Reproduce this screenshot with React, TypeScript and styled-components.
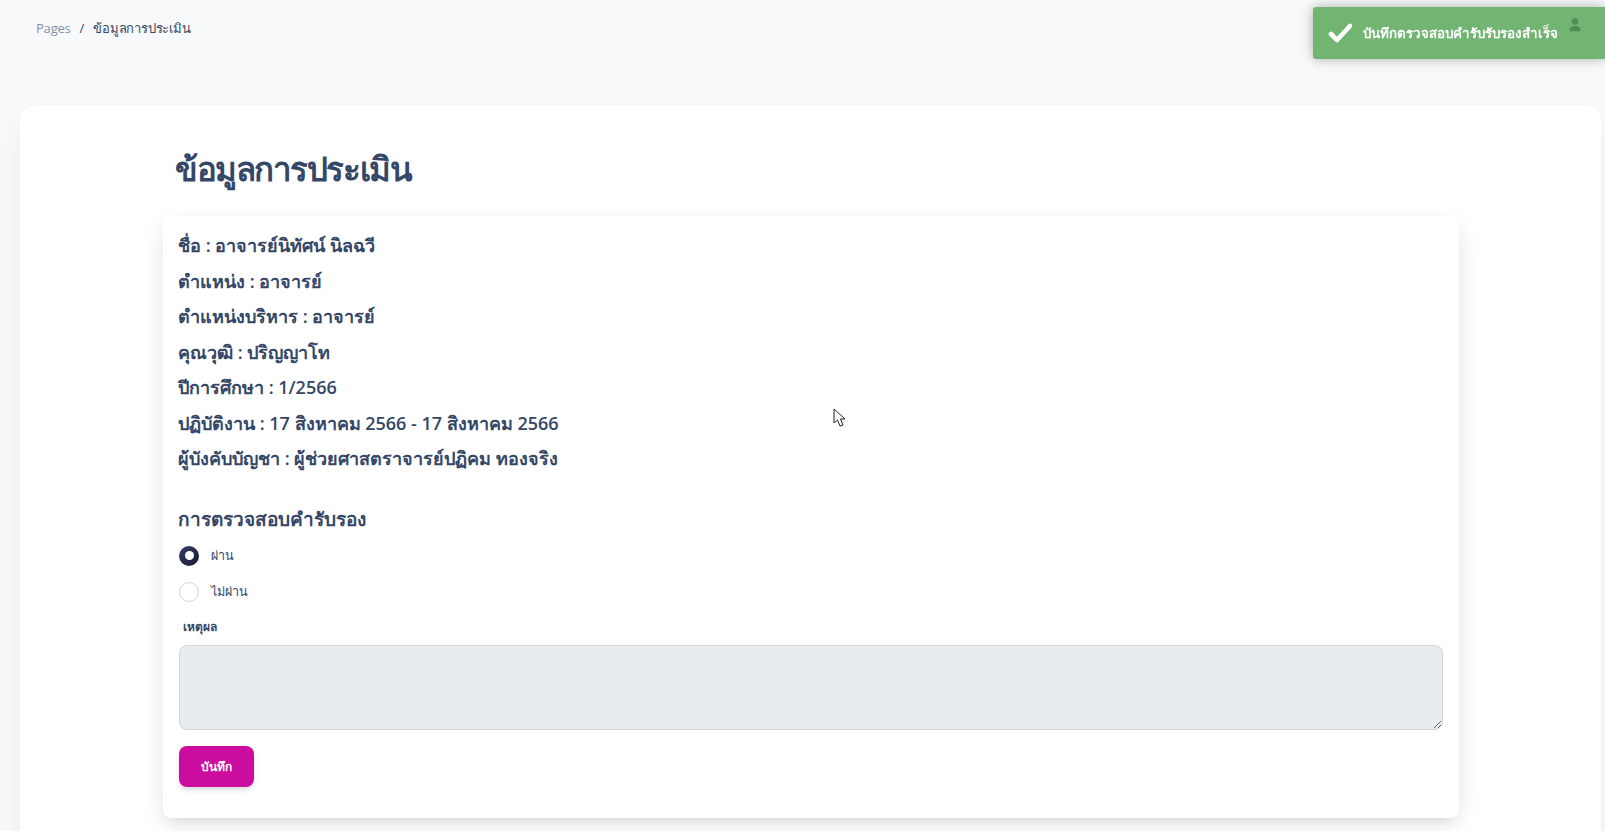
import styled, { createGlobalStyle } from 'styled-components'

const GlobalStyle = createGlobalStyle`
  html, body {
    margin: 0;
    height: 831px;
    overflow: hidden;
    background: #f8f9fa;
    font-family: "Open Sans", "Noto Sans", sans-serif;
    color: #344767;
  }
  * {
    box-sizing: border-box;
  }
`

const Page = styled.div`
  width: 1605px;
  height: 831px;
  padding: 0 4px 0 20px;
  overflow: hidden;
`

const Header = styled.header`
  height: 105px;
  display: flex;
  justify-content: space-between;
  align-items: flex-start;
  padding: 18px 19px 0 16px;
`

const Breadcrumb = styled.nav`
  display: flex;
  gap: 9px;
  font-size: 13px;
  line-height: 20px;
  letter-spacing: -0.2px;
`

const Crumb = styled.span<{ $muted?: boolean }>`
  color: ${(p) => (p.$muted ? '#8392ab' : '#344767')};
`

const UserIcon = styled.svg`
  width: 14px;
  height: 14px;
  fill: #344767;
`

const Main = styled.main`
  height: 760px;
  background: #fff;
  border-radius: 16px;
  padding: 37px 142px 0 143px;
  box-shadow: 0 20px 27px 0 rgba(0, 0, 0, 0.05);
`

const Title = styled.h1`
  margin: 0 0 20px 12px;
  font-size: 33px;
  line-height: 54px;
  font-weight: 600;
  letter-spacing: -1.45px;
`

const Card = styled.section`
  height: 602px;
  background: #fff;
  border-radius: 8px;
  padding: 12px 16px;
  box-shadow: 0 8px 26px -4px rgba(20, 20, 20, 0.15), 0 8px 9px -5px rgba(20, 20, 20, 0.06);
`

const Info = styled.p`
  margin: 0 0 0 -1px;
  font-size: 18px;
  line-height: 35.5px;
  font-weight: 600;
`

const Subtitle = styled.h5`
  margin: 23px 0 0 -1px;
  font-size: 19px;
  line-height: 38px;
  font-weight: 600;
`

const RadioRow = styled.label`
  display: flex;
  align-items: center;
  gap: 12px;
  height: 36px;
  font-size: 12.6px;
  color: #344767;
`

const RadioDot = styled.span<{ $checked?: boolean }>`
  width: 20px;
  height: 20px;
  display: flex;
  align-items: center;
  justify-content: center;
  border-radius: 50%;
  border: ${(p) => (p.$checked ? '0' : '1px solid #d2d6da')};
  background: ${(p) => (p.$checked ? 'linear-gradient(310deg, #141727, #3a416f)' : '#fff')};

  &::after {
    content: '';
    display: ${(p) => (p.$checked ? 'block' : 'none')};
    width: 9px;
    height: 9px;
    border-radius: 50%;
    background: #fff;
  }
`

const FieldLabel = styled.label`
  display: block;
  margin: 8px 0 0 4px;
  font-size: 12px;
  line-height: 18px;
  font-weight: 700;
`

const Reason = styled.textarea`
  display: block;
  width: 100%;
  height: 85px;
  margin-top: 9px;
  background: #e9ecef;
  border: 1px solid #d2d6da;
  border-radius: 8px;
  resize: vertical;
`

const SaveButton = styled.button`
  display: block;
  width: 75px;
  height: 41px;
  margin-top: 16px;
  border: 0;
  border-radius: 8px;
  background: #cb0c9f;
  color: #fff;
  font-family: inherit;
  font-size: 12px;
  font-weight: 700;
  box-shadow: 0 4px 7px -1px rgba(0, 0, 0, 0.11), 0 2px 4px -1px rgba(0, 0, 0, 0.07);
`

const Toast = styled.div`
  position: fixed;
  top: 7px;
  right: 0;
  width: 292px;
  height: 52px;
  display: flex;
  align-items: center;
  gap: 11px;
  padding: 0 0 0 15px;
  border-radius: 3px 0 0 3px;
  background: #51a351;
  opacity: 0.8;
  box-shadow: 0 0 12px #999;
  color: #fff;
  font-size: 13.4px;
  font-weight: 700;
`

const CheckIcon = styled.svg`
  width: 24px;
  height: 24px;
  flex: none;
  fill: none;
  stroke: #fff;
  stroke-width: 4.6;
  stroke-linecap: round;
  stroke-linejoin: round;
`

const Cursor = styled.svg`
  position: fixed;
  left: 833px;
  top: 408px;
  width: 13px;
  height: 20px;
`

const details = [
  'ชื่อ : อาจารย์นิทัศน์ นิลฉวี',
  'ตำแหน่ง : อาจารย์',
  'ตำแหน่งบริหาร : อาจารย์',
  'คุณวุฒิ : ปริญญาโท',
  'ปีการศึกษา : 1/2566',
  'ปฏิบัติงาน : 17 สิงหาคม 2566 - 17 สิงหาคม 2566',
  'ผู้บังคับบัญชา : ผู้ช่วยศาสตราจารย์ปฏิคม ทองจริง',
]

export default function App() {
  return (
    <Page>
      <GlobalStyle />
      <Header>
        <Breadcrumb>
          <Crumb $muted>Pages</Crumb>
          <Crumb>/</Crumb>
          <Crumb>ข้อมูลการประเมิน</Crumb>
        </Breadcrumb>
        <UserIcon viewBox="0 0 16 16">
          <circle cx="8" cy="4" r="3.8" />
          <path d="M1.5 15c0-4 2.5-6 6.5-6s6.500 2 6.500 6z" />
        </UserIcon>
      </Header>
      <Main>
        <Title>ข้อมูลการประเมิน</Title>
        <Card>
          {details.map((line) => (
            <Info key={line}>{line}</Info>
          ))}
          <Subtitle>การตรวจสอบคำรับรอง</Subtitle>
          <RadioRow>
            <RadioDot $checked />
            ผ่าน
          </RadioRow>
          <RadioRow>
            <RadioDot />
            ไม่ผ่าน
          </RadioRow>
          <FieldLabel>เหตุผล</FieldLabel>
          <Reason disabled />
          <SaveButton>บันทึก</SaveButton>
        </Card>
      </Main>
      <Toast>
        <CheckIcon viewBox="0 0 24 24">
          <path d="M3 13l6 6L22 5" />
        </CheckIcon>
        บันทึกตรวจสอบคำรับรับรองสำเร็จ
      </Toast>
      <Cursor viewBox="0 0 13 20">
        <path d="M1 1v14l3.500-3 2.500 6 3-1-2.500-6H12z" fill="#fff" stroke="#222" strokeWidth="1" />
      </Cursor>
    </Page>
  )
}
